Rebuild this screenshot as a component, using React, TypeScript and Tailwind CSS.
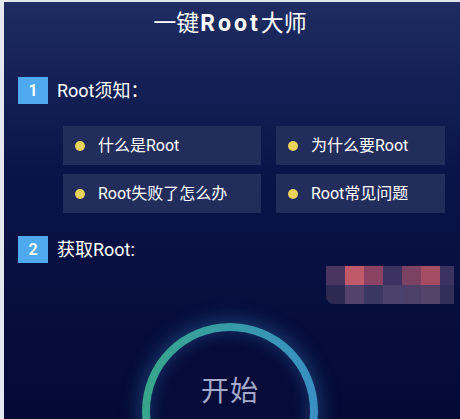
const font = { fontFamily: 'Roboto, "Noto Sans CJK SC", sans-serif' };

const tips = [
  ['什么是Root', '为什么要Root'],
  ['Root失败了怎么办', 'Root常见问题'],
];

const mosaic = [
  ['#4a3560', '#c05a6a', '#8c4262', '#3c3262', '#7c4262', '#a44c62', '#3c3262'],
  ['#2c2a52', '#52426c', '#3a3862', '#4a426c', '#4c4068', '#54446c', '#32305a'],
];

function Step({ n, label }: { n: number; label: string }) {
  return (
    <div className="flex items-center h-[27px] pl-[14px]">
      <div className="w-[30px] h-[27px] bg-[#4fa9ee] text-white text-[16px] flex items-center justify-center font-semibold">
        {n}
      </div>
      <span className="ml-[9px] text-white text-[18px] leading-none">{label}</span>
    </div>
  );
}

export default function App() {
  return (
    <div className="w-[460px] h-[419px] overflow-hidden flex bg-[#e4e7ee]" style={font}>
      <div className="w-[4px] shrink-0" />
      <div className="flex-1 relative overflow-hidden mt-[2px] bg-gradient-to-b from-[#1e2c62] via-[#0b1448] via-40% to-[#040a36]">
        <div className="h-[44px] flex items-center justify-center text-white text-[23px] mr-[4px]">
          <span>一键</span>
          <span className="font-bold tracking-[3px] ml-[1px]">Root</span>
          <span>大师</span>
        </div>

        <div className="mt-[31px]">
          <Step n={1} label="Root须知：" />
        </div>

        <div className="mt-[22px] pl-[59px] grid grid-cols-[198px_169px] gap-x-[15px] gap-y-[9px]">
          {tips.flat().map((t) => (
            <div key={t} className="h-[39px] bg-[#232d5c] flex items-center pl-[12px] text-white text-[16px]">
              <span className="w-[10px] h-[10px] rounded-full bg-[#e9d35a] shrink-0" />
              <span className="ml-[13px]">{t}</span>
            </div>
          ))}
        </div>

        <div className="mt-[23px]">
          <Step n={2} label="获取Root:" />
        </div>

        <div className="mt-[3px] flex justify-end pr-[6px]">
          <div className="grid grid-cols-[19px_19px_19px_19px_19px_19px_14px] rounded-bl-[8px] overflow-hidden blur-[0.5px]">
            {mosaic.flat().map((c, i) => (
              <div key={i} className="h-[19px]" style={{ backgroundColor: c }} />
            ))}
          </div>
        </div>

        <div className="mt-[19px] flex justify-center">
          <div className="w-[176px] h-[176px] rounded-full p-[8px] bg-gradient-to-r from-[#38a689] to-[#3a8fc2] shadow-[0_0_18px_4px_rgba(60,140,200,0.35)] mr-[4px]">
            <div className="w-full h-full rounded-full bg-[#060c3a] shadow-[inset_0_0_16px_2px_rgba(60,130,200,0.3)] flex flex-col items-center pt-[40px]">
              <span className="text-[28px] text-[#a4abca] tracking-[1px]">开始</span>
            </div>
          </div>
        </div>
      </div>
    </div>
  );
}
